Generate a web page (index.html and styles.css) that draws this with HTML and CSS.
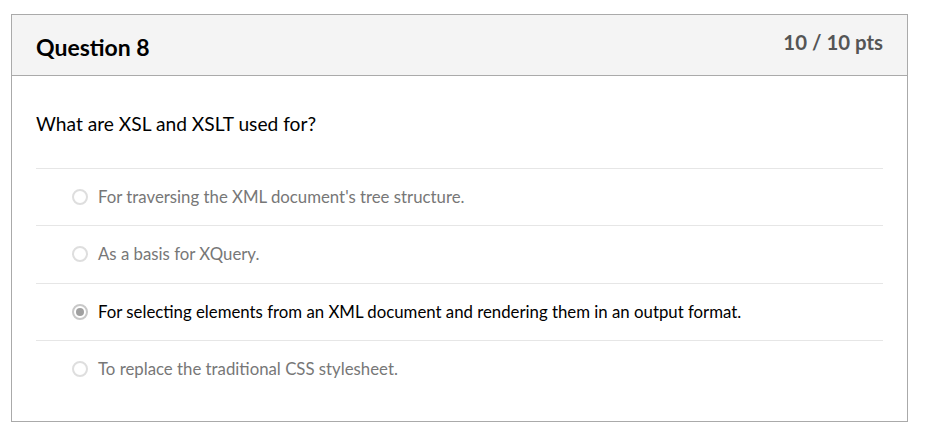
FILE: index.html
```html
<!DOCTYPE html>
<html>
<head>
<meta charset="utf-8">
<link rel="stylesheet" href="styles.css">
</head>
<body>
<div class="card">
  <div class="header">
    <h2 class="title">Question 8</h2>
    <div class="pts">10 / 10 pts</div>
  </div>
  <div class="body">
    <p class="question">What are XSL and XSLT used for?</p>
    <div class="answers">
      <div class="answer"><span class="radio"></span><span class="label">For traversing the XML document's tree structure.</span></div>
      <div class="answer"><span class="radio"></span><span class="label">As a basis for XQuery.</span></div>
      <div class="answer selected"><span class="radio"></span><span class="label">For selecting elements from an XML document and rendering them in an output format.</span></div>
      <div class="answer"><span class="radio"></span><span class="label">To replace the traditional CSS stylesheet.</span></div>
    </div>
  </div>
</div>
</body>
</html>
```
FILE: styles.css
```css
html, body { margin: 0; padding: 0; background: #fff; }
body { font-family: Lato, "Open Sans", sans-serif; color: #2d3b45; }
.card {
  margin: 14px 0 0 11px;
  width: 897px;
  box-sizing: border-box;
  border: 1px solid #aaaaaa;
  background: #fff;
}
.header {
  display: flex;
  justify-content: space-between;
  align-items: flex-start;
  background: #f4f4f4;
  border-bottom: 1px solid #aaaaaa;
  height: 60px;
  padding: 0 24px;
}
.title {
  margin: 18px 0 0 0;
  font-size: 23px;
  line-height: 28px;
  font-weight: 700;
  color: #000;
}
.pts {
  margin-top: 15px;
  font-size: 20.4px;
  line-height: 25px;
  font-weight: 700;
  color: #555;
}
.body { padding: 0 24px 24px 24px; }
.question {
  margin: 0;
  padding: 35px 0 31px 0;
  font-size: 19.2px;
  line-height: 26px;
  color: #000;
}
.answer {
  display: flex;
  align-items: center;
  height: 56.33px;
  border-top: 1px solid #e6e6e6;
  padding-left: 36px;
}
.radio {
  width: 16px;
  height: 16px;
  box-sizing: border-box;
  border: 2px solid #dedede;
  border-radius: 50%;
  margin-right: 10px;
  display: flex;
  align-items: center;
  justify-content: center;
  flex: none;
}
.label { font-size: 16.8px; line-height: 22px; color: #777; }
.selected .label { color: #000; }
.selected .radio { border-color: #c8c8c8; }
.selected .radio::after {
  content: "";
  width: 8px;
  height: 8px;
  border-radius: 50%;
  background: #a0a0a0;
}
```
